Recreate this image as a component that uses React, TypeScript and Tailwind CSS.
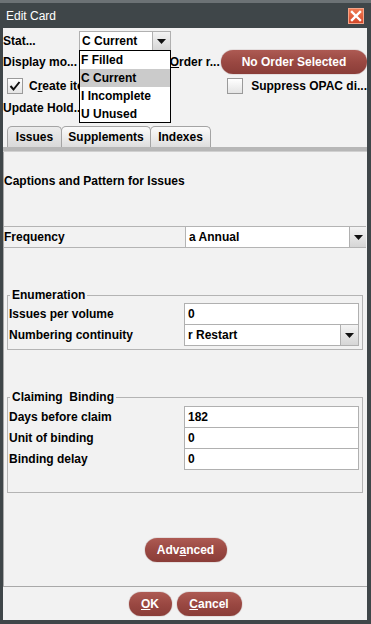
import React from "react";

const Tri = () => (
  <svg width="9" height="5" viewBox="0 0 9 5">
    <polygon points="0,0 9,0 4.5,5" fill="#111" />
  </svg>
);

const ArrowBtn = ({ w }: { w: string }) => (
  <div className={`${w} h-full flex items-center justify-center border-l border-[#b0b0b0] bg-gradient-to-b from-[#f4f4f4] to-[#d6d6d6]`}>
    <Tri />
  </div>
);

const RedBtn = ({ w, children }: { w: string; children: React.ReactNode }) => (
  <button className={`${w} h-[24px] rounded-full bg-gradient-to-b from-[#ad5a53] via-[#9a4842] to-[#8a3d38] text-white font-bold text-[12px] leading-none flex items-center justify-center whitespace-nowrap shadow-[0_0_1px_#6b2e2a]`}>
    {children}
  </button>
);

const Check = ({ checked }: { checked?: boolean }) => (
  <div className="w-[16px] h-[16px] border border-[#9a9a9a] bg-gradient-to-b from-[#ffffff] to-[#e4e4e4] flex items-center justify-center shrink-0">
    {checked && (
      <svg width="12" height="12" viewBox="0 0 12 12">
        <polyline points="1.5,6 4.5,9.5 10.5,2" fill="none" stroke="#111" strokeWidth="2" />
      </svg>
    )}
  </div>
);

const FieldRow = ({ label, value, combo, cls }: { label: string; value: string; combo?: boolean; cls?: string }) => (
  <div className={`flex items-stretch h-[22px] ${cls ?? ""}`}>
    <div className="w-[176px] pl-[1px] flex items-center">{label}</div>
    <div className="w-[175px] border border-[#b0b0b0] bg-white flex items-stretch">
      <div className="flex-1 pl-[3px] flex items-center">{value}</div>
      {combo && <ArrowBtn w="w-[18px]" />}
    </div>
  </div>
);

export default function App() {
  return (
    <div className="w-[371px] h-[624px] bg-[#3f4649] border-t-[3px] border-[#6c7275] flex flex-col font-['Liberation_Sans',Arial,sans-serif] text-[12px] leading-[14px] font-bold text-black overflow-hidden">
      {/* Title bar */}
      <div className="h-[25px] flex items-center justify-between pl-[6px] pr-[7px] shrink-0">
        <span className="text-white font-normal text-[12px]">Edit Card</span>
        <div className="w-[16px] h-[16px] bg-gradient-to-b from-[#f07a52] to-[#d4482a] border border-[#f3a58a] flex items-center justify-center">
          <svg width="12" height="12" viewBox="0 0 12 12">
            <path d="M2 2 L10 10 M10 2 L2 10" stroke="#fff" strokeWidth="2.4" strokeLinecap="square" />
          </svg>
        </div>
      </div>

      {/* Content */}
      <div className="ml-[3px] mr-[4px] h-[592px] bg-[#f2f2f2] flex flex-col overflow-hidden shrink-0">
        {/* Top form */}
        <div className="h-[98px] relative shrink-0 whitespace-nowrap">
          <div className="flex items-center h-[20px] mt-[3px]">
            <span className="w-[76px]">Stat...</span>
            <div className="w-[92px] h-[20px] border border-[#b0b0b0] bg-white flex items-stretch">
              <div className="flex-1 pl-[2px] flex items-center">C Current</div>
              <ArrowBtn w="w-[18px]" />
            </div>
          </div>
          <div className="flex items-center h-[24px] -mt-[1px]">
            <span className="w-[169px]">Display mo...</span>
            <span className="w-[52px]"><u>O</u>rder r...</span>
            <RedBtn w="w-[146px] shrink-0">No Order Selected</RedBtn>
          </div>
          <div className="flex items-center h-[16px] mt-[4px]">
            <div className="w-[221px] pl-[4px] flex items-center gap-[6px]">
              <Check checked />
              <span className="w-[50px] overflow-hidden">C<u>r</u>eate items</span>
            </div>
            <div className="pl-[4px] flex items-center gap-[8px]">
              <Check />
              <span>Suppress OPAC di...</span>
            </div>
          </div>
          <div className="h-[14px] mt-[7px]">Update Hold...</div>

          {/* Dropdown popup */}
          <div className="absolute left-[76px] top-[22px] w-[92px] h-[73px] border border-black bg-white flex flex-col">
            <div className="h-[18px] pl-[1px] flex items-center">F Filled</div>
            <div className="h-[18px] pl-[1px] flex items-center bg-[#cbcbcb]">C Current</div>
            <div className="h-[18px] pl-[1px] flex items-center">I Incomplete</div>
            <div className="h-[17px] pl-[1px] flex items-center">U Unused</div>
          </div>
        </div>

        {/* Tabs */}
        <div className="h-[21px] flex items-end pl-[4px] shrink-0">
          <div className="w-[55px] h-[21px] border border-b-0 border-[#a4a4a4] rounded-t-[5px] bg-gradient-to-b from-[#ececec] to-[#d9d9d9] flex items-center justify-center">Issues</div>
          <div className="w-[90px] h-[21px] -ml-[1px] border border-b-0 border-[#a4a4a4] rounded-t-[5px] bg-gradient-to-b from-[#fbfbfb] to-[#dedede] flex items-center justify-center">Supplements</div>
          <div className="w-[61px] h-[21px] -ml-[1px] border border-b-0 border-[#a4a4a4] rounded-t-[5px] bg-gradient-to-b from-[#fbfbfb] to-[#dedede] flex items-center justify-center">Indexes</div>
        </div>
        <div className="h-[5px] bg-[#b7b7b7] border-b border-[#d0d0d0] shrink-0" />

        {/* Panel */}
        <div className="h-[435px] border-l border-b border-[#a9a9a9] flex flex-col shrink-0">
          <div className="mt-[22px] h-[14px]">Captions and Pattern for Issues</div>

          <div className="mt-[38px] mr-[1px] h-[22px] border-y border-[#b4b4b4] flex items-stretch">
            <div className="flex-1 flex items-center">Frequency</div>
            <div className="w-[181px] border-l border-[#b4b4b4] bg-white flex items-stretch">
              <div className="flex-1 pl-[3px] flex items-center">a Annual</div>
              <ArrowBtn w="w-[17px]" />
            </div>
          </div>

          <fieldset className="mt-[40px] ml-[3px] w-[356px] border border-[#b4b4b4] pb-[3px]">
            <legend className="ml-[2px] px-[2px] leading-[14px]">Enumeration</legend>
            <div className="pt-[1px]">
              <FieldRow label="Issues per volume" value="0" />
              <FieldRow label="Numbering continuity" value="r Restart" combo cls="-mt-[1px]" />
            </div>
          </fieldset>

          <fieldset className="mt-[40px] ml-[3px] w-[356px] border border-[#b4b4b4] pb-[22px]">
            <legend className="ml-[2px] px-[2px] leading-[14px] whitespace-pre">Claiming  Binding</legend>
            <div className="pt-[2px]">
              <FieldRow label="Days before claim" value="182" cls="h-[21px]" />
              <FieldRow label="Unit of binding" value="0" cls="h-[21px] -mt-[1px]" />
              <FieldRow label="Binding delay" value="0" cls="h-[21px] -mt-[1px]" />
            </div>
          </fieldset>

          <div className="mt-[45px] flex justify-center">
            <RedBtn w="w-[82px]">Adv<u>a</u>nced</RedBtn>
          </div>
        </div>

        {/* Bottom buttons */}
        <div className="pt-[5px] flex justify-center gap-[5px]">
          <RedBtn w="w-[43px]"><u>O</u>K</RedBtn>
          <RedBtn w="w-[65px]"><u>C</u>ancel</RedBtn>
        </div>
      </div>
    </div>
  );
}
